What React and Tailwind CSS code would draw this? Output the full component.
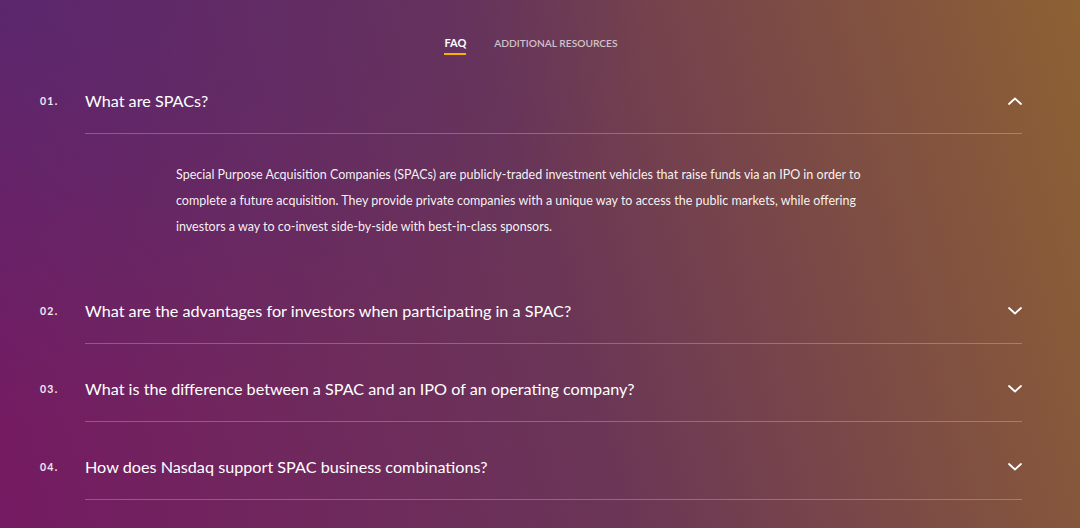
import React from "react";

const items = [
  { n: "01.", q: "What are SPACs?", open: true },
  { n: "02.", q: "What are the advantages for investors when participating in a SPAC?" },
  { n: "03.", q: "What is the difference between a SPAC and an IPO of an operating company?" },
  { n: "04.", q: "How does Nasdaq support SPAC business combinations?" },
];

function Chevron({ up }) {
  return (
    <svg width="14" height="8" viewBox="0 0 14 8" fill="none" className="shrink-0">
      {up ? (
        <path d="M1 7L7 1.5L13 7" stroke="white" strokeWidth="1.8" strokeLinecap="round" strokeLinejoin="round" />
      ) : (
        <path d="M1 1L7 6.5L13 1" stroke="white" strokeWidth="1.8" strokeLinecap="round" strokeLinejoin="round" />
      )}
    </svg>
  );
}

export default function App() {
  return (
    <div
      className="w-[1080px] h-[528px] overflow-hidden text-white bg-[radial-gradient(ellipse_60%_80%_at_0%_0%,rgba(72,44,120,0.55),rgba(72,44,120,0)),linear-gradient(75deg,#751a63_0%,#6a3557_50%,#8e6133_100%)]"
      style={{ fontFamily: "Lato, 'Noto Sans', sans-serif" }}
    >
      <div className="pl-[40px] pr-[58px]">
        <div className="flex justify-center gap-[28px] pt-[37px] h-[56px] font-bold">
          <div className="flex flex-col items-center">
            <span className="text-[11px] leading-[12px] text-white">FAQ</span>
            <span className="mt-[4px] h-[2px] w-full bg-[#f5b400]" />
          </div>
          <span className="text-[10.2px] leading-[12px] text-white/70 font-semibold">ADDITIONAL RESOURCES</span>
        </div>
        {items.map((it) => (
          <div key={it.n} className="flex">
            <div className="w-[45px] shrink-0 pt-[39px] text-[10.5px] font-bold tracking-[0.12em] leading-[12px] text-white/90">
              {it.n}
            </div>
            <div className="flex-1">
              <div className="flex items-center justify-between pt-[29px] pb-[16px] border-b border-white/25">
                <span className="text-[16.2px] leading-[32px] text-white">{it.q}</span>
                <Chevron up={it.open} />
              </div>
              {it.open && (
                <div className="pl-[91px] pt-[28px] pb-[26px]">
                  <p className="max-w-[700px] text-[12.5px] leading-[26px] text-white/95">
                    Special Purpose Acquisition Companies (SPACs) are publicly-traded investment vehicles that raise funds via an IPO in order to complete a future acquisition. They provide private companies with a unique way to access the public markets, while offering investors a way to co-invest side-by-side with best-in-class sponsors.
                  </p>
                </div>
              )}
            </div>
          </div>
        ))}
      </div>
    </div>
  );
}
